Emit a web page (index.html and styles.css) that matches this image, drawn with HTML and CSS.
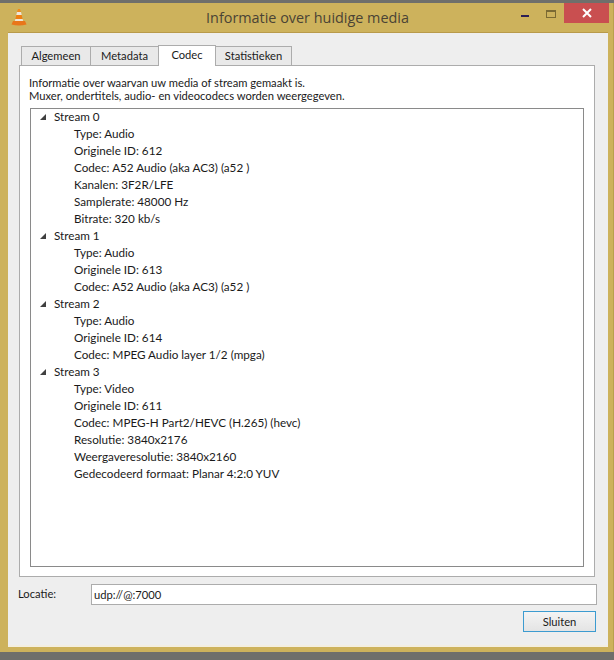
FILE: index.html
```html
<!DOCTYPE html>
<html lang="nl">
<head>
<meta charset="utf-8">
<title>Informatie over huidige media</title>
<link rel="stylesheet" href="styles.css">
</head>
<body>
<div class="window">
  <header class="titlebar">
    <svg class="cone" width="18" height="20" viewBox="0 0 18 20">
      <path d="M8 2h2l1 3H7z" fill="#f08a1c"/>
      <path d="M7 5h4l.7 3H6.300z" fill="#efe6d8"/>
      <path d="M6.300 8h5.400l.9 4H5.400z" fill="#ee7f12"/>
      <path d="M5.400 12h7.200l.5 2.200H4.900z" fill="#efe6d8"/>
      <path d="M3 14h12l1.500 3.500q-7.500 2-15 0z" fill="#e9761a"/>
    </svg>
    <h1 class="title">Informatie over huidige media</h1>
    <div class="controls">
      <span class="min"></span>
      <span class="max"></span>
      <span class="close">
        <svg width="10" height="10" viewBox="0 0 10 10"><path d="M1 1l8 8M9 1l-8 8" stroke="#fff" stroke-width="2"/></svg>
      </span>
    </div>
  </header>
  <main class="client">
    <nav class="tabs">
      <span class="tab tab-algemeen">Algemeen</span>
      <span class="tab tab-metadata">Metadata</span>
      <span class="tab tab-active">Codec</span>
      <span class="tab tab-stat">Statistieken</span>
    </nav>
    <section class="panel">
      <p class="intro">Informatie over waarvan uw media of stream gemaakt is.<br>Muxer, ondertitels, audio- en videocodecs worden weergegeven.</p>
      <div class="tree">
        <div class="stream"><i class="arrow"></i>Stream 0</div>
        <div class="item">Type: Audio</div>
        <div class="item">Originele ID: 612</div>
        <div class="item">Codec: A52 Audio (aka AC3) (a52 )</div>
        <div class="item">Kanalen: 3F2R/LFE</div>
        <div class="item">Samplerate: 48000 Hz</div>
        <div class="item">Bitrate: 320 kb/s</div>
        <div class="stream"><i class="arrow"></i>Stream 1</div>
        <div class="item">Type: Audio</div>
        <div class="item">Originele ID: 613</div>
        <div class="item">Codec: A52 Audio (aka AC3) (a52 )</div>
        <div class="stream"><i class="arrow"></i>Stream 2</div>
        <div class="item">Type: Audio</div>
        <div class="item">Originele ID: 614</div>
        <div class="item">Codec: MPEG Audio layer 1/2 (mpga)</div>
        <div class="stream"><i class="arrow"></i>Stream 3</div>
        <div class="item">Type: Video</div>
        <div class="item">Originele ID: 611</div>
        <div class="item">Codec: MPEG-H Part2/HEVC (H.265) (hevc)</div>
        <div class="item">Resolutie: 3840x2176</div>
        <div class="item">Weergaveresolutie: 3840x2160</div>
        <div class="item">Gedecodeerd formaat: Planar 4:2:0 YUV</div>
      </div>
    </section>
    <div class="location">
      <label class="loc-label">Locatie:</label>
      <div class="loc-input">udp://@:7000</div>
    </div>
    <div class="actions"><button class="btn">Sluiten</button></div>
  </main>
</div>
</body>
</html>
```
FILE: styles.css
```css
* { box-sizing: border-box; }
html, body { margin: 0; padding: 0; }
body {
  width: 614px;
  height: 660px;
  background: #6f6f6b;
  overflow: hidden;
  font-family: "Lato", "Noto Sans", sans-serif;
  font-size: 11.2px;
  color: #1a1a1a;
}
.window {
  height: 649px;
  margin-top: 3px;
  background: #cdb25c;
  border-right: 1px solid #b8a04e;
  padding: 0 5px 5px 8px;
  display: flex;
  flex-direction: column;
}
.titlebar {
  height: 29px;
  flex: none;
  display: flex;
  align-items: flex-start;
  position: relative;
  margin-left: -8px;
  margin-right: -5px;
}
.cone { position: absolute; left: 10px; top: 4px; }
.title {
  margin: 5px 0 0;
  width: 100%;
  text-align: center;
  font-family: "Open Sans", sans-serif;
  font-size: 14.4px;
  font-weight: 400;
  color: #4a4335;
  padding-left: 2px;
}
.controls { position: absolute; right: 4px; top: 0; display: flex; align-items: flex-start; }
.min { width: 8px; height: 2px; background: #2c1f55; margin: 12px 17px 0 0; }
.max { width: 10px; height: 8px; border: 1px solid #7b6a33; border-top-width: 2px; margin: 7px 8px 0 0; }
.close {
  width: 45px;
  height: 20px;
  background: #c94f50;
  display: flex;
  align-items: center;
  justify-content: center;
}
.client {
  flex: 1;
  background: #eeeeee;
  border-top: 1px solid #b89a4a;
  padding: 12px 13px 0 11px;
  display: flex;
  flex-direction: column;
  min-height: 0;
  border-bottom: 2px solid #f3eee0;
}
.tabs { display: flex; height: 20px; padding-left: 2px; flex: none; align-items: flex-end; position: relative; z-index: 1; }
.tab {
  height: 19px;
  background: #e9e9e9;
  border: 1px solid #acacac;
  border-bottom: none;
  margin-right: -1px;
  text-align: center;
  line-height: 18px;
}
.tab-algemeen { width: 70px; }
.tab-metadata { width: 69px; }
.tab-active {
  height: 21px;
  width: 58px;
  background: #fff;
  position: relative;
  top: 1px;
}
.tab-stat { width: 77px; }
.panel {
  height: 512px;
  flex: none;
  background: #fff;
  border: 1px solid #acacac;
  padding: 10px 10px 9px 10px;
  display: flex;
  flex-direction: column;
}
.intro { margin: 0 0 0 -1px; line-height: 13px; height: 26px; flex: none; white-space: nowrap; }
.tree {
  flex: 1;
  border: 1px solid #8a8a8a;
  padding: 0;
  margin-top: 6px;
  min-height: 0;
  font-size: 11.7px;
}
.stream, .item { height: 17px; line-height: 15px; white-space: nowrap; }
.stream { padding-left: 23px; position: relative; }
.item { padding-left: 43px; }
.arrow {
  position: absolute;
  left: 9px;
  top: 5px;
  width: 0;
  height: 0;
  border-left: 6px solid transparent;
  border-bottom: 6px solid #404040;
}
.location {
  display: flex;
  align-items: center;
  margin-top: 7px;
  height: 21px;
  flex: none;
  margin-right: -2px;
}
.loc-label { width: 73px; flex: none; margin-left: -1px; padding-bottom: 2px; }
.loc-input {
  flex: 1;
  height: 21px;
  background: #fff;
  border: 1px solid #acacac;
  padding-left: 2px;
  line-height: 19px;
}
.actions { display: flex; justify-content: flex-end; margin-top: 6px; margin-right: -1px; flex: none; }
.btn {
  width: 73px;
  height: 21px;
  padding: 0;
  font: inherit;
  color: #1a1a1a;
  border: 1px solid #3c9bd0;
  background: linear-gradient(#f4f4f4, #e4e4e4);
}
```
